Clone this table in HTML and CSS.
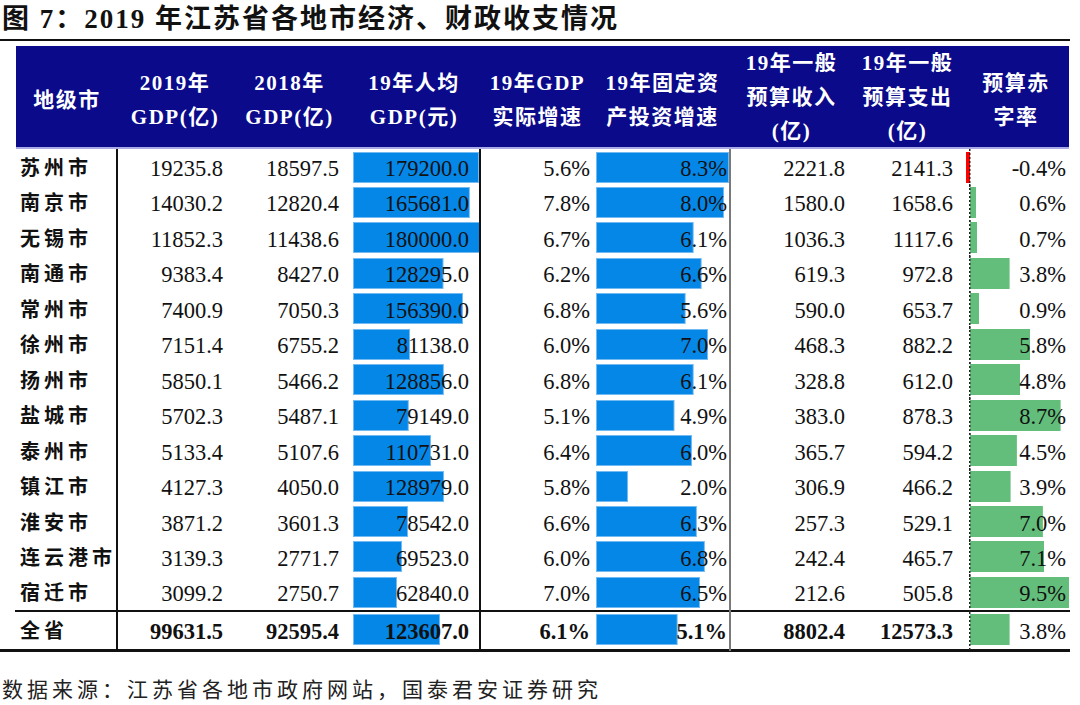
FILE: index.html
```html
<!DOCTYPE html>
<html lang="zh-CN">
<head>
<meta charset="utf-8">
<title>2019年江苏省各地市经济、财政收支情况</title>
<link rel="stylesheet" href="styles.css">
</head>
<body>
<div class="page">
  <h1 class="title">图 7：2019 年江苏省各地市经济、财政收支情况</h1>
  <div class="table">
    <div class="thead grid">
      <div class="th"><span>地级市</span></div>
      <div class="th"><span>2019年</span><span>GDP(亿)</span></div>
      <div class="th"><span>2018年</span><span>GDP(亿)</span></div>
      <div class="th"><span>19年人均</span><span>GDP(元)</span></div>
      <div class="th"><span>19年GDP</span><span>实际增速</span></div>
      <div class="th"><span>19年固定资</span><span>产投资增速</span></div>
      <div class="th th3"><span>19年一般</span><span>预算收入</span><span>(亿)</span></div>
      <div class="th th3"><span>19年一般</span><span>预算支出</span><span>(亿)</span></div>
      <div class="th"><span>预算赤</span><span>字率</span></div>
    </div>
    <div class="tbody">
      <div class="row grid">
        <div class="c name">苏州市</div><div class="c c2">19235.8</div><div class="c c3">18597.5</div>
        <div class="c c4" style="--w:126.4px">179200.0</div><div class="c c5">5.6%</div>
        <div class="c c6" style="--w:133px">8.3%</div><div class="c c7">2221.8</div><div class="c c8">2141.3</div>
        <div class="c c9 neg" style="--w:4px">-0.4%</div>
      </div>
      <div class="row grid">
        <div class="c name">南京市</div><div class="c c2">14030.2</div><div class="c c3">12820.4</div>
        <div class="c c4" style="--w:116.9px">165681.0</div><div class="c c5">7.8%</div>
        <div class="c c6" style="--w:128.2px">8.0%</div><div class="c c7">1580.0</div><div class="c c8">1658.6</div>
        <div class="c c9 pos" style="--w:6.3px">0.6%</div>
      </div>
      <div class="row grid">
        <div class="c name">无锡市</div><div class="c c2">11852.3</div><div class="c c3">11438.6</div>
        <div class="c c4" style="--w:127px">180000.0</div><div class="c c5">6.7%</div>
        <div class="c c6" style="--w:97.7px">6.1%</div><div class="c c7">1036.3</div><div class="c c8">1117.6</div>
        <div class="c c9 pos" style="--w:7.3px">0.7%</div>
      </div>
      <div class="row grid">
        <div class="c name">南通市</div><div class="c c2">9383.4</div><div class="c c3">8427.0</div>
        <div class="c c4" style="--w:90.5px">128295.0</div><div class="c c5">6.2%</div>
        <div class="c c6" style="--w:105.7px">6.6%</div><div class="c c7">619.3</div><div class="c c8">972.8</div>
        <div class="c c9 pos" style="--w:39.6px">3.8%</div>
      </div>
      <div class="row grid">
        <div class="c name">常州市</div><div class="c c2">7400.9</div><div class="c c3">7050.3</div>
        <div class="c c4" style="--w:110.3px">156390.0</div><div class="c c5">6.8%</div>
        <div class="c c6" style="--w:89.7px">5.6%</div><div class="c c7">590.0</div><div class="c c8">653.7</div>
        <div class="c c9 pos" style="--w:9.4px">0.9%</div>
      </div>
      <div class="row grid">
        <div class="c name">徐州市</div><div class="c c2">7151.4</div><div class="c c3">6755.2</div>
        <div class="c c4" style="--w:57.2px">81138.0</div><div class="c c5">6.0%</div>
        <div class="c c6" style="--w:112.1px">7.0%</div><div class="c c7">468.3</div><div class="c c8">882.2</div>
        <div class="c c9 pos" style="--w:60.4px">5.8%</div>
      </div>
      <div class="row grid">
        <div class="c name">扬州市</div><div class="c c2">5850.1</div><div class="c c3">5466.2</div>
        <div class="c c4" style="--w:90.9px">128856.0</div><div class="c c5">6.8%</div>
        <div class="c c6" style="--w:97.7px">6.1%</div><div class="c c7">328.8</div><div class="c c8">612.0</div>
        <div class="c c9 pos" style="--w:50px">4.8%</div>
      </div>
      <div class="row grid">
        <div class="c name">盐城市</div><div class="c c2">5702.3</div><div class="c c3">5487.1</div>
        <div class="c c4" style="--w:55.8px">79149.0</div><div class="c c5">5.1%</div>
        <div class="c c6" style="--w:78.5px">4.9%</div><div class="c c7">383.0</div><div class="c c8">878.3</div>
        <div class="c c9 pos" style="--w:90.6px">8.7%</div>
      </div>
      <div class="row grid">
        <div class="c name">泰州市</div><div class="c c2">5133.4</div><div class="c c3">5107.6</div>
        <div class="c c4" style="--w:78.1px">110731.0</div><div class="c c5">6.4%</div>
        <div class="c c6" style="--w:96.1px">6.0%</div><div class="c c7">365.7</div><div class="c c8">594.2</div>
        <div class="c c9 pos" style="--w:46.9px">4.5%</div>
      </div>
      <div class="row grid">
        <div class="c name">镇江市</div><div class="c c2">4127.3</div><div class="c c3">4050.0</div>
        <div class="c c4" style="--w:91px">128979.0</div><div class="c c5">5.8%</div>
        <div class="c c6" style="--w:32px">2.0%</div><div class="c c7">306.9</div><div class="c c8">466.2</div>
        <div class="c c9 pos" style="--w:40.6px">3.9%</div>
      </div>
      <div class="row grid">
        <div class="c name">淮安市</div><div class="c c2">3871.2</div><div class="c c3">3601.3</div>
        <div class="c c4" style="--w:55.4px">78542.0</div><div class="c c5">6.6%</div>
        <div class="c c6" style="--w:100.9px">6.3%</div><div class="c c7">257.3</div><div class="c c8">529.1</div>
        <div class="c c9 pos" style="--w:72.9px">7.0%</div>
      </div>
      <div class="row grid">
        <div class="c name">连云港市</div><div class="c c2">3139.3</div><div class="c c3">2771.7</div>
        <div class="c c4" style="--w:49.1px">69523.0</div><div class="c c5">6.0%</div>
        <div class="c c6" style="--w:108.9px">6.8%</div><div class="c c7">242.4</div><div class="c c8">465.7</div>
        <div class="c c9 pos" style="--w:74px">7.1%</div>
      </div>
      <div class="row grid">
        <div class="c name">宿迁市</div><div class="c c2">3099.2</div><div class="c c3">2750.7</div>
        <div class="c c4" style="--w:44.3px">62840.0</div><div class="c c5">7.0%</div>
        <div class="c c6" style="--w:104.2px">6.5%</div><div class="c c7">212.6</div><div class="c c8">505.8</div>
        <div class="c c9 pos" style="--w:99px">9.5%</div>
      </div>
      <div class="row total grid">
        <div class="c name">全省</div><div class="c c2 b">99631.5</div><div class="c c3 b">92595.4</div>
        <div class="c c4 b" style="--w:87.2px">123607.0</div><div class="c c5 b">6.1%</div>
        <div class="c c6 b" style="--w:81.7px">5.1%</div><div class="c c7 b">8802.4</div><div class="c c8 b">12573.3</div>
        <div class="c c9 pos" style="--w:39.6px">3.8%</div>
      </div>
    </div>
  </div>
  <p class="source">数据来源：江苏省各地市政府网站，国泰君安证券研究</p>
</div>
</body>
</html>
```

FILE: styles.css
```css
html, body {
  margin: 0;
  padding: 0;
  background: #ffffff;
}

.page {
  width: 1080px;
  color: #111;
}

.title {
  margin: 0;
  width: 1068px;
  height: 39px;
  line-height: 39px;
  padding-left: 2px;
  border-bottom: 2px solid #111;
  font-family: "Liberation Serif", "Noto Sans CJK SC", serif;
  font-weight: 700;
  font-size: 27px;
  letter-spacing: 2px;
  white-space: nowrap;
}

.table {
  width: 1070px;
  margin-top: 5px;
  border-bottom: 3px solid #111;
}

.grid {
  display: grid;
  grid-template-columns: 102px 114px 115px 134px 113px 137px 121px 111px 106px;
  margin-left: 16px;
  width: 1053px;
}

.thead {
  height: 101px;
  background: #0a0a8a;
  border-bottom: 2px solid #aaaae6;
  color: #fff;
  font-family: "Liberation Serif", "Noto Sans CJK SC", serif;
  font-weight: 700;
  font-size: 21px;
  letter-spacing: 1.5px;
}

.th {
  display: flex;
  flex-direction: column;
  align-items: center;
  justify-content: center;
  padding-top: 5px;
  line-height: 34px;
  white-space: nowrap;
}

.th3 {
  padding-top: 0;
}

.row {
  height: 35.46px;
}

.row.total {
  height: 37px;
  border-top: 2px solid #111;
  margin-left: 15px;
  padding-left: 1px;
  width: 1054px;
  box-sizing: content-box;
}

.c {
  box-sizing: border-box;
  text-align: right;
  font-family: "Liberation Serif", serif;
  font-size: 22.5px;
  line-height: 39px;
  white-space: nowrap;
  color: #111;
}

.b {
  font-weight: 700;
}

.name {
  text-align: left;
  padding-left: 4px;
  font-family: "Noto Sans CJK SC", sans-serif;
  font-weight: 700;
  font-size: 20px;
  letter-spacing: 4px;
  line-height: 36px;
  border-right: 2px solid #111;
}

.c2 { padding-right: 9px; }
.c3 { padding-right: 8px; }

.c4 {
  padding-right: 10px;
  border-right: 2px solid #111;
  background:
    linear-gradient(#0587e8, #0587e8) no-repeat 7px 3.5px / calc(var(--w) - 2px) 29px,
    linear-gradient(#74baf2, #74baf2) no-repeat 6px 2.5px / var(--w) 31px;
}

.c5 { padding-right: 4px; }

.c6 {
  padding-right: 2px;
  border-right: 2px solid #7a7a7a;
  background:
    linear-gradient(#0587e8, #0587e8) no-repeat 3px 3.5px / calc(var(--w) - 2px) 29px,
    linear-gradient(#74baf2, #74baf2) no-repeat 2px 2.5px / var(--w) 31px;
}

.c7 { padding-right: 7px; }
.c8 { padding-right: 10px; }

.c9 {
  padding-right: 3px;
}

.c9.pos {
  background:
    repeating-linear-gradient(#222 0 2px, transparent 2px 4px) no-repeat 6px 0 / 1.5px 100%,
    linear-gradient(#63be7b, #63be7b) no-repeat 7px 2.5px / var(--w) 31px;
}

.c9.neg {
  background:
    repeating-linear-gradient(#222 0 2px, transparent 2px 4px) no-repeat 6px 0 / 1.5px 100%,
    linear-gradient(#f00, #f00) no-repeat calc(7px - var(--w)) 2.5px / var(--w) 31px;
}

.source {
  margin: 22px 0 0 2px;
  font-family: "Noto Sans CJK SC", sans-serif;
  font-size: 21px;
  letter-spacing: 4px;
  line-height: 28px;
  color: #222;
  white-space: nowrap;
}
```
